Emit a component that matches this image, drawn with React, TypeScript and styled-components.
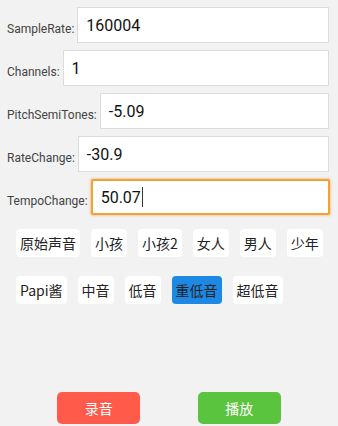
import React from "react";
import styled, { createGlobalStyle } from "styled-components";

const Global = createGlobalStyle`
  html, body { margin: 0; padding: 0; background: #f2f2f2; }
  #root { min-height: 100vh; }
`;

const Page = styled.div`
  min-height: 100vh;
  box-sizing: border-box;
  display: flex;
  flex-direction: column;
  font-family: Roboto, "Noto Sans CJK SC", sans-serif;
  background: #f2f2f2;
`;

const Form = styled.div`
  display: flex;
  flex-direction: column;
  gap: 7px;
  padding: 7px 9px 0 7px;
`;

const Row = styled.div`
  display: flex;
  align-items: center;
`;

const Label = styled.span`
  font-size: 12px;
  color: #444;
  padding-top: 8px;
  margin-right: 3px;
  white-space: nowrap;
`;

const Field = styled.div<{ $focused?: boolean }>`
  flex: 1;
  height: 36px;
  box-sizing: border-box;
  display: flex;
  align-items: center;
  background: #fff;
  border: ${(p) => (p.$focused ? "2px solid #f0a23a" : "1px solid #dcdcdc")};
  box-shadow: ${(p) => (p.$focused ? "0 0 2px 1px rgba(240,160,60,0.45)" : "none")};
  border-radius: ${(p) => (p.$focused ? "2px" : "0")};
  padding-left: 8px;
  font-size: 16px;
  color: #111;
  margin-right: ${(p) => (p.$focused ? "-1px" : "0")};
`;

const Caret = styled.span`
  display: inline-block;
  width: 1px;
  height: 20px;
  background: #333;
  margin-left: 1px;
`;

const Chips = styled.div`
  display: flex;
  flex-direction: column;
  gap: 19px;
  padding: 14px 0 0 16px;
`;

const ChipRow = styled.div`
  display: flex;
  gap: 11px;
`;

const Chip = styled.div<{ $active?: boolean }>`
  height: 28px;
  padding: 0 4px;
  display: flex;
  align-items: center;
  border-radius: 4px;
  background: ${(p) => (p.$active ? "#1e88e5" : "#fff")};
  color: #222;
  font-family: "Noto Sans CJK SC", sans-serif;
  font-size: 14px;
`;

const Spacer = styled.div`
  flex: 1;
`;

const Actions = styled.div`
  display: flex;
  justify-content: space-evenly;
  padding-bottom: 2px;
`;

const ActionButton = styled.div<{ $color: string }>`
  width: 83px;
  height: 32px;
  border-radius: 5px;
  background: ${(p) => p.$color};
  color: #fff;
  display: flex;
  align-items: center;
  justify-content: center;
  font-family: "Noto Sans CJK SC", sans-serif;
  font-size: 14px;
`;

const fields = [
  { label: "SampleRate:", value: "160004" },
  { label: "Channels:", value: "1" },
  { label: "PitchSemiTones:", value: "-5.09" },
  { label: "RateChange:", value: "-30.9" },
  { label: "TempoChange:", value: "50.07", focused: true },
];

const row1 = ["原始声音", "小孩", "小孩2", "女人", "男人", "少年"];
const row2 = ["Papi酱", "中音", "低音", "重低音", "超低音"];

export default function App() {
  return (
    <>
      <Global />
      <Page>
        <Form>
          {fields.map((f) => (
            <Row key={f.label}>
              <Label>{f.label}</Label>
              <Field $focused={f.focused}>
                {f.value}
                {f.focused && <Caret />}
              </Field>
            </Row>
          ))}
        </Form>
        <Chips>
          <ChipRow>
            {row1.map((c) => (
              <Chip key={c}>{c}</Chip>
            ))}
          </ChipRow>
          <ChipRow>
            {row2.map((c) => (
              <Chip key={c} $active={c === "重低音"}>
                {c}
              </Chip>
            ))}
          </ChipRow>
        </Chips>
        <Spacer />
        <Actions>
          <ActionButton $color="#ff5a4a">录音</ActionButton>
          <ActionButton $color="#5ac43e">播放</ActionButton>
        </Actions>
      </Page>
    </>
  );
}
